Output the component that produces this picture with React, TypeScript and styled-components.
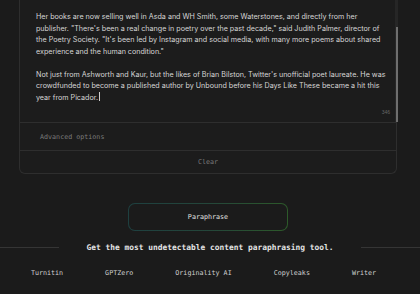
import React from "react";
import styled, { createGlobalStyle } from "styled-components";

const Global = createGlobalStyle`
  html, body { margin: 0; padding: 0; background: #1b1b1b; overflow: hidden; }
  body { width: 420px; height: 294px; }
`;

const Page = styled.div`
  display: flex;
  flex-direction: column;
  width: 420px;
  height: 294px;
  background: #1b1b1b;
`;

const Card = styled.div`
  margin-left: 19px;
  width: 376px;
  border: 1px solid #2e2e2e;
  border-top: none;
  border-radius: 0 0 6px 6px;
  background: #1c1c1c;
  display: flex;
  flex-direction: column;
`;

const Editor = styled.div`
  display: flex;
  height: 122px;
  border-bottom: 1px solid #2e2e2e;
`;

const TextCol = styled.div`
  flex: 1;
  display: flex;
  flex-direction: column;
  padding: 11px 0 0 16px;
`;

const Para = styled.div`
  font-family: Inter, "Liberation Sans", Arial, sans-serif;
  font-size: 7.15px;
  line-height: 11.5px;
  color: #d6d6d6;
  white-space: nowrap;
  & + & { margin-top: 11.5px; }
`;

const Line = styled.div``;

const Caret = styled.span`
  display: inline-block;
  width: 1px;
  height: 9px;
  margin-left: 1px;
  vertical-align: -1px;
  background: #cfcfcf;
`;

const Counter = styled.div`
  margin-top: auto;
  align-self: flex-end;
  margin-right: 5px;
  margin-bottom: 7px;
  font-family: "Liberation Sans", Arial, sans-serif;
  font-size: 5px;
  color: #666;
`;

const Track = styled.div`
  width: 3px;
  margin-right: -2px;
  background: #262626;
  display: flex;
  flex-direction: column;
  justify-content: flex-end;
`;

const Thumb = styled.div`
  height: 95px;
  width: 2px;
  margin-left: 1px;
  background: #6e6e6e;
`;

const Row = styled.div<{ $h: number; $center?: boolean; $border?: boolean }>`
  height: ${(p) => p.$h}px;
  display: flex;
  align-items: center;
  justify-content: ${(p) => (p.$center ? "center" : "flex-start")};
  padding-left: ${(p) => (p.$center ? 0 : 20)}px;
  border-bottom: ${(p) => (p.$border ? "1px solid #2e2e2e" : "none")};
  font-family: "DejaVu Sans Mono", "Liberation Mono", monospace;
  font-size: 6.7px;
  color: #7a7a7a;
`;

const ButtonWrap = styled.div`
  margin: 29px 0 0 128px;
  width: 160px;
  height: 28px;
  padding: 1px;
  box-sizing: border-box;
  border-radius: 7px;
  background: linear-gradient(90deg, #1e4040 0%, #24463a 50%, #2d5a2a 100%);
`;

const Button = styled.button`
  width: 100%;
  height: 100%;
  border: none;
  border-radius: 6px;
  background: #1b1b1b;
  color: #e2e2e2;
  font-family: "DejaVu Sans Mono", "Liberation Mono", monospace;
  font-size: 6.7px;
  padding: 0;
  cursor: pointer;
`;

const Headline = styled.div`
  margin-top: 12px;
  display: flex;
  align-items: center;
  gap: 27px;
`;

const Rule = styled.div`
  flex: 1;
  height: 1px;
  background: #353535;
`;

const HeadText = styled.div`
  font-family: "DejaVu Sans Mono", "Liberation Mono", monospace;
  font-weight: bold;
  font-size: 7.9px;
  color: #e4e4e4;
  white-space: nowrap;
`;

const Links = styled.div`
  margin-top: 17px;
  display: flex;
  justify-content: center;
  gap: 42px;
  padding-right: 13px;
`;

const LinkItem = styled.span`
  font-family: "DejaVu Sans Mono", "Liberation Mono", monospace;
  font-size: 6.7px;
  color: #cfcfcf;
`;

export default function App() {
  return (
    <>
      <Global />
      <Page>
        <Card>
          <Editor>
            <TextCol>
              <Para>
                <Line>Her books are now selling well in Asda and WH Smith, some Waterstones, and directly from her</Line>
                <Line>publisher. "There's been a real change in poetry over the past decade," said Judith Palmer, director of</Line>
                <Line>the Poetry Society. "It's been led by Instagram and social media, with many more poems about shared</Line>
                <Line>experience and the human condition."</Line>
              </Para>
              <Para>
                <Line>Not just from Ashworth and Kaur, but the likes of Brian Bilston, Twitter's unofficial poet laureate. He was</Line>
                <Line>crowdfunded to become a published author by Unbound before his Days Like These became a hit this</Line>
                <Line>year from Picador.<Caret /></Line>
              </Para>
              <Counter>346</Counter>
            </TextCol>
            <Track>
              <Thumb />
            </Track>
          </Editor>
          <Row $h={27} $border>Advanced options</Row>
          <Row $h={22} $center>Clear</Row>
        </Card>
        <ButtonWrap>
          <Button>Paraphrase</Button>
        </ButtonWrap>
        <Headline>
          <Rule />
          <HeadText>Get the most undetectable content paraphrasing tool.</HeadText>
          <Rule />
        </Headline>
        <Links>
          <LinkItem>Turnitin</LinkItem>
          <LinkItem>GPTZero</LinkItem>
          <LinkItem>Originality AI</LinkItem>
          <LinkItem>Copyleaks</LinkItem>
          <LinkItem>Writer</LinkItem>
        </Links>
      </Page>
    </>
  );
}
